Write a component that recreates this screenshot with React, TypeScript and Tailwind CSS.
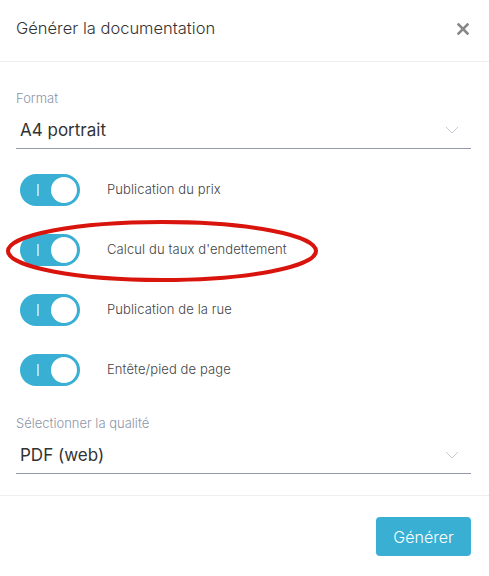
import React from "react";

function Toggle() {
  return (
    <div className="relative w-[60px] h-[32px] rounded-full bg-[#39afd3] flex items-center shrink-0">
      <div className="absolute left-[17px] top-[10px] w-[2px] h-[12px] bg-white/60" />
      <div className="absolute right-[3px] top-[3px] w-[26px] h-[26px] rounded-full bg-white" />
    </div>
  );
}

function Row({ label, circled }: { label: string; circled?: boolean }) {
  return (
    <div className="relative h-[60px] flex items-center pl-[4px]">
      <Toggle />
      <span className="ml-[27px] text-[13px] font-light text-[#444] tracking-[0.1px]">{label}</span>
      {circled && (
        <svg className="absolute left-[-11px] top-[-2px] pointer-events-none" width="316" height="66" viewBox="0 0 316 66">
          <ellipse cx="157" cy="33" rx="154" ry="29" fill="none" stroke="#d9140c" strokeWidth="4" />
        </svg>
      )}
    </div>
  );
}

function Select({ label, value }: { label: string; value: string }) {
  return (
    <div>
      <div className="text-[13px] font-light text-[#8e95a8] leading-[16px]">{label}</div>
      <div className="mt-[13px] h-[30px] flex items-start justify-between border-b border-[#959aaa] pl-[4px] pr-[12px]">
        <span className="text-[17px] text-[#333] leading-[22px]">{value}</span>
        <svg width="14" height="8" viewBox="0 0 14 8" className="mt-[7px]">
          <path d="M1 1 L7 7 L13 1" fill="none" stroke="#c8ccd4" strokeWidth="1" />
        </svg>
      </div>
    </div>
  );
}

export default function App() {
  return (
    <div className="w-[489px] h-[576px] bg-white flex flex-col" style={{ fontFamily: "Inter, 'Noto Sans', sans-serif" }}>
      <div className="h-[62px] flex items-center justify-between px-[16px] pb-[4px] border-b border-[#eeeeee] shrink-0">
        <span className="text-[16.5px] font-light text-[#333]">Générer la documentation</span>
        <svg width="12" height="12" viewBox="0 0 12 12" className="mr-[4px]">
          <path d="M1.5 1.5 L10.5 10.5 M10.5 1.5 L1.5 10.5" stroke="#888" strokeWidth="2.6" strokeLinecap="square" />
        </svg>
      </div>
      <div className="px-[16px] pt-[28px] pb-[21px] border-b border-[#eeeeee] pr-[18px]">
        <Select label="Format" value="A4 portrait" />
        <div className="mt-[11px]">
          <Row label="Publication du prix" />
          <Row label="Calcul du taux d'endettement" circled />
          <Row label="Publication de la rue" />
          <Row label="Entête/pied de page" />
        </div>
        <div className="mt-[15px]">
          <Select label="Sélectionner la qualité" value="PDF (web)" />
        </div>
      </div>
      <div className="flex justify-end px-[18px] pt-[21px]">
        <button className="w-[95px] h-[39px] rounded-[4px] bg-[#39afd3] text-white text-[16px] font-light">Générer</button>
      </div>
    </div>
  );
}
